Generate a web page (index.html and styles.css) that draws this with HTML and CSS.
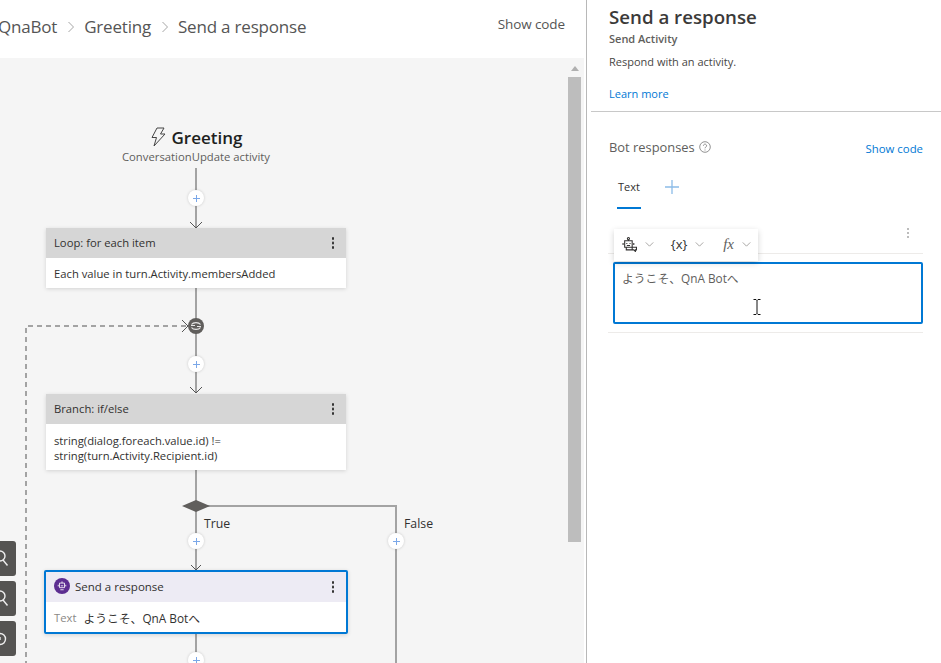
FILE: index.html
```html
<!DOCTYPE html>
<html lang="ja">
<head>
    <meta charset="UTF-8">
    <meta name="viewport" content="width=device-width, initial-scale=1.0">
    <title>Send a response</title>
    <link rel="stylesheet" href="styles.css">
</head>
<body>

    <div class="app">
        <div class="main">
            <div class="topbar">
                <div class="crumbs">
                    <span>QnaBot</span>
                    <svg class="crumb-sep" viewBox="0 0 8 12"><path d="M1.5 1l5 5-5 5"/></svg>
                    <span>Greeting</span>
                    <svg class="crumb-sep" viewBox="0 0 8 12"><path d="M1.5 1l5 5-5 5"/></svg>
                    <span>Send a response</span>
                </div>
                <span class="show-code">Show code</span>
            </div>

            <div class="canvas">
                <!-- connectors, coordinates are the canvas' own -->
                <svg class="wires" width="584" height="605" viewBox="0 0 584 605">
                    <g class="wire">
                        <path d="M196 110V170"/>
                        <path d="M196 230V335"/>
                        <path d="M196 412V512"/>
                        <path d="M196 575V605"/>
                        <path d="M196 448H396V605"/>
                    </g>
                    <path class="wire-dash" d="M186 268H26V605"/>
                    <g class="arrow">
                        <path d="M190 164l6 6 6-6"/>
                        <path d="M190 329l6 6 6-6"/>
                        <path d="M191 507l5 5 5-5"/>
                        <path d="M182 262l6 6-6 6"/>
                    </g>
                    <path class="diamond" d="M182 448l14-6 14 6-14 6z"/>
                    <circle class="loop" cx="196" cy="268" r="8"/>
                    <path class="loop-mark" d="M191.500 266.500a5 3.500 0 0 1 9 0M200.500 269.500a5 3.500 0 0 1-9 0M191 267.500h4M197 268.500h4"/>
                </svg>

                <div class="head-node">
                    <div class="head-title">
                        <svg class="bolt" viewBox="0 0 16 20"><path d="M7 1h7l-3.500 6H15L4 19l2.500-8.500H2z"/></svg>
                        <span>Greeting</span>
                    </div>
                    <div class="head-sub">ConversationUpdate activity</div>
                </div>

                <span class="plus plus-a"></span>
                <span class="plus plus-b"></span>
                <span class="plus plus-c"></span>
                <span class="plus plus-d"></span>
                <span class="plus plus-e"></span>

                <div class="node node-loop">
                    <div class="node-head"><span>Loop: for each item</span><i class="kebab"></i></div>
                    <div class="node-body">Each value in turn.Activity.membersAdded</div>
                </div>

                <div class="node node-branch">
                    <div class="node-head"><span>Branch: if/else</span><i class="kebab"></i></div>
                    <div class="node-body">string(dialog.foreach.value.id) !=<br>string(turn.Activity.Recipient.id)</div>
                </div>

                <span class="branch-label label-true">True</span>
                <span class="branch-label label-false">False</span>

                <div class="node node-send">
                    <div class="node-head">
                        <span class="bot-badge">
                            <svg viewBox="0 0 12 12"><path d="M6 .5v2M3 2.500h6v5.500H3zM4.500 5.800h3M1.500 4.500v2M10.500 4.500v2M4 10.500h4"/></svg>
                        </span>
                        <span>Send a response</span>
                        <i class="kebab"></i>
                    </div>
                    <div class="node-body send-body"><span class="send-key">Text</span><span class="send-val">ようこそ、QnA Botへ</span></div>
                </div>

                <div class="tools">
                    <div class="tool"><svg viewBox="0 0 16 35"><circle cx="0" cy="15" r="5"/><path d="M3 19l4.500 5.500"/></svg></div>
                    <div class="tool"><svg viewBox="0 0 16 35"><circle cx="0" cy="15" r="5"/><path d="M3 19l4.500 5.500"/></svg></div>
                    <div class="tool"><svg viewBox="0 0 16 35"><circle cx="0" cy="18" r="5.500"/><path d="M0 16v3"/></svg></div>
                </div>

                <div class="scrollbar">
                    <span class="scroll-up"></span>
                    <span class="scroll-thumb"></span>
                </div>
            </div>
        </div>

        <div class="panel">
            <div class="panel-top">
                <h2>Send a response</h2>
                <div class="panel-kind">Send Activity</div>
                <p class="panel-desc">Respond with an activity.</p>
                <a class="link">Learn more</a>
            </div>

            <div class="panel-bottom">
                <div class="resp-head">
                    <div class="resp-title">
                        <span>Bot responses</span>
                        <svg class="help" viewBox="0 0 12 12"><circle cx="6" cy="6" r="5.300"/><path d="M4.400 4.700a1.600 1.600 0 1 1 2.400 1.400c-.6.3-.8.600-.8 1.200M6 8.500v1"/></svg>
                    </div>
                    <a class="link">Show code</a>
                </div>

                <div class="tabs">
                    <span class="tab">Text</span>
                    <svg class="tab-add" viewBox="0 0 14 14"><path d="M7 0v14M0 7h14"/></svg>
                </div>

                <div class="editor">
                    <div class="editor-bar">
                        <i class="kebab kebab-light"></i>
                    </div>
                    <div class="toolbar">
                        <span class="tool-item">
                            <svg class="tool-bot" viewBox="0 0 14 14"><circle cx="6" cy="1.500" r="1"/><path d="M6 2.500v1M2.500 3.500h7v6h-7zM4.500 5.500v1M7.500 5.500v1M4.500 8h3M1 5.500v2M11 5.500v2M4 9.500V12h5M9.500 9.500h4v2.500h-1v1.500L11 12h-1.500z"/></svg>
                            <svg class="chev" viewBox="0 0 10 6"><path d="M.5.5L5 5 9.500.5"/></svg>
                        </span>
                        <span class="tool-item">
                            <span class="tool-var">{x}</span>
                            <svg class="chev" viewBox="0 0 10 6"><path d="M.5.5L5 5 9.500.5"/></svg>
                        </span>
                        <span class="tool-item">
                            <span class="tool-fx">fx</span>
                            <svg class="chev" viewBox="0 0 10 6"><path d="M.5.5L5 5 9.500.5"/></svg>
                        </span>
                    </div>
                    <div class="editor-box">
                        ようこそ、QnA Botへ
                        <svg class="ibeam" viewBox="0 0 8 16"><path d="M.5.5h2.500l1 1 1-1h2.500M4 1.500v13M.5 15.500h2.500l1-1 1 1h2.500"/></svg>
                    </div>
                </div>
            </div>
        </div>
    </div>

</body>
</html>
```

FILE: styles.css
```css
* {
    box-sizing: border-box;
}
body {
    margin: 0;
    font-family: "Open Sans", "Noto Sans CJK JP", sans-serif;
    color: #333;
    background-color: #fff;
    overflow: hidden;
}
.app {
    display: flex;
    width: 941px;
    height: 663px;
}

/* left side */
.main {
    width: 587px;
    flex-shrink: 0;
    border-right: 1px solid #b8b8b8;
    display: flex;
    flex-direction: column;
}
.topbar {
    height: 58px;
    display: flex;
    justify-content: space-between;
    padding-right: 21px;
}
.crumbs {
    display: flex;
    align-items: center;
    height: 53px;
    margin-left: -2px;
    font-size: 17px;
    letter-spacing: -0.2px;
    color: #555;
}
.crumb-sep {
    width: 8px;
    height: 12px;
    margin: 0 9px 0 10px;
    fill: none;
    stroke: #a6a6a6;
}
.show-code {
    font-size: 13.500px;
    letter-spacing: -0.1px;
    line-height: 48px;
    color: #555;
}
.canvas {
    position: relative;
    width: 584px;
    height: 605px;
    background-color: #f5f5f5;
    overflow: hidden;
}
.wires {
    position: absolute;
    left: 0;
    top: 0;
}
.wire path {
    fill: none;
    stroke: #a3a3a3;
    stroke-width: 2;
}
.wire-dash {
    fill: none;
    stroke: #a3a3a3;
    stroke-width: 2;
    stroke-dasharray: 5 4;
}
.arrow path {
    fill: none;
    stroke: #555;
}
.diamond {
    fill: #605e5c;
}
.loop {
    fill: #605e5c;
}
.loop-mark {
    fill: none;
    stroke: #e6e6e6;
    stroke-width: 1.200;
}
.head-node {
    position: absolute;
    left: 46px;
    top: 66px;
    width: 300px;
    text-align: center;
}
.head-title {
    display: flex;
    justify-content: center;
    align-items: center;
    gap: 6px;
    height: 26px;
    font-size: 17px;
    font-weight: 600;
    color: #201f1e;
}
.bolt {
    width: 16px;
    height: 20px;
    fill: none;
    stroke: #444;
    stroke-width: 1;
}
.head-sub {
    font-size: 11.300px;
    line-height: 13px;
    color: #605e5c;
}
.plus {
    position: absolute;
    width: 16px;
    height: 16px;
    border-radius: 50%;
    background-color: #fff;
    box-shadow: 0 0 3px rgba(0, 0, 0, 0.18);
}
.plus::before,
.plus::after {
    content: "";
    position: absolute;
    background-color: #7aa7e8;
}
.plus::before {
    left: 4.500px;
    top: 7.500px;
    width: 7px;
    height: 1px;
}
.plus::after {
    left: 7.500px;
    top: 4.500px;
    width: 1px;
    height: 7px;
}
.plus-a { left: 188px; top: 132px; }
.plus-b { left: 188px; top: 298px; }
.plus-c { left: 188px; top: 475px; }
.plus-d { left: 388px; top: 475px; }
.plus-e { left: 188px; top: 594px; }
.node {
    position: absolute;
    left: 46px;
    width: 300px;
    background-color: #fff;
    box-shadow: 0 1px 4px rgba(0, 0, 0, 0.14);
    font-size: 11.250px;
    color: #323130;
}
.node-loop { top: 170px; }
.node-branch { top: 336px; }
.node-send {
    left: 44px;
    top: 512px;
    width: 304px;
    border: 2px solid #0078d4;
    border-radius: 2px;
}
.node-head {
    position: relative;
    display: flex;
    align-items: center;
    height: 30px;
    padding: 0 0 2px 8px;
    background-color: #d6d6d6;
}
.node-body {
    padding: 9px 8px 7px;
    line-height: 14px;
}
.node-branch .node-body {
    padding: 9px 8px 7px;
    line-height: 15px;
}
.node-send .node-head {
    height: 30px;
    padding-left: 8px;
    background-color: #edebf4;
    font-size: 11.500px;
    gap: 5px;
}
.bot-badge {
    width: 16px;
    height: 16px;
    border-radius: 50%;
    background-color: #5c2d91;
    display: flex;
    align-items: center;
    justify-content: center;
}
.bot-badge svg {
    width: 10px;
    height: 10px;
    fill: none;
    stroke: #fff;
}
.send-body {
    display: flex;
    align-items: center;
    height: 30px;
    padding: 2px 8px 0;
}
.send-key {
    color: #8a8886;
    margin-right: 7px;
}
.send-val {
    font-size: 11.800px;
    color: #323130;
}
.kebab {
    position: absolute;
    right: 12px;
    top: 9px;
    width: 2.500px;
    height: 2.500px;
    border-radius: 50%;
    background-color: #333;
    box-shadow: 0 4.500px 0 #333, 0 9px 0 #333;
}
.kebab-light {
    right: 14px;
    top: 4px;
    width: 2px;
    height: 2px;
    background-color: #a6a6a6;
    box-shadow: 0 4px 0 #a6a6a6, 0 8px 0 #a6a6a6;
}
.branch-label {
    position: absolute;
    top: 457px;
    font-size: 12.300px;
    line-height: 17px;
    color: #323130;
}
.label-true { left: 204px; }
.label-false { left: 404px; }
.tools {
    position: absolute;
    left: 0;
    top: 483px;
    display: flex;
    flex-direction: column;
    gap: 5px;
}
.tool {
    width: 16px;
    height: 35px;
    background-color: #555452;
    border-radius: 0 3px 3px 0;
}
.tool svg {
    display: block;
    width: 16px;
    height: 35px;
    fill: none;
    stroke: #eee;
    stroke-width: 1.400;
}
.scrollbar {
    position: absolute;
    left: 568px;
    top: 0;
    width: 13px;
    height: 605px;
    display: flex;
    flex-direction: column;
    align-items: center;
}
.scroll-up {
    margin-top: 8px;
    width: 0;
    height: 0;
    border-left: 4px solid transparent;
    border-right: 4px solid transparent;
    border-bottom: 5px solid #b0b0b0;
}
.scroll-thumb {
    margin-top: 6px;
    width: 13px;
    height: 465px;
    background-color: #bdbdbd;
}

/* right side */
.panel {
    flex: 1;
    min-width: 0;
    padding-left: 4px;
    font-size: 12px;
    color: #605e5c;
}
.panel-top {
    height: 112px;
    padding: 4px 0 0 18px;
    border-bottom: 1px solid #c8c8c8;
}
.panel-top h2 {
    margin: 0;
    font-size: 18.700px;
    line-height: 26px;
    font-weight: 600;
    color: #3b3a39;
}
.panel-kind {
    font-size: 11px;
    font-weight: 600;
    line-height: 18px;
    color: #605e5c;
}
.panel-desc {
    margin: 6px 0 0;
    font-size: 11px;
    line-height: 15px;
    color: #484644;
}
.link {
    display: inline-block;
    font-size: 11px;
    color: #0078d4;
}
.panel-top .link {
    margin-top: 17px;
    line-height: 15px;
}
.panel-bottom {
    padding: 25px 18px 0 18px;
}
.resp-head {
    display: flex;
    justify-content: space-between;
    align-items: center;
    height: 20px;
}
.resp-title {
    display: flex;
    align-items: center;
    gap: 4px;
    font-size: 12.900px;
}
.resp-head .link {
    margin-top: 3px;
    font-size: 11.400px;
}
.help {
    width: 12px;
    height: 12px;
    fill: none;
    stroke: #767676;
    stroke-width: 0.800;
}
.tabs {
    display: flex;
    align-items: center;
    gap: 21px;
    height: 40px;
    margin-top: 12px;
    padding-left: 8px;
}
.tab {
    display: block;
    height: 40px;
    line-height: 36px;
    font-size: 11px;
    color: #323130;
    border-bottom: 2px solid #0078d4;
    padding: 0 1px;
}
.tab-add {
    width: 14px;
    height: 14px;
    margin: 0 0 5px 3px;
    stroke: #8cbce8;
    stroke-width: 1.300;
}
.editor {
    position: relative;
    margin: 15px 0 0 -1px;
    padding-bottom: 8px;
    border-bottom: 1px solid #edebe9;
}
.editor-bar {
    position: relative;
    height: 30px;
    border-bottom: 1px solid #edebe9;
}
.toolbar {
    position: absolute;
    left: 6px;
    top: 5px;
    display: flex;
    align-items: center;
    justify-content: space-between;
    width: 144px;
    height: 32px;
    padding: 0 7px 2px 8px;
    background-color: #fff;
    box-shadow: 0 2px 6px rgba(0, 0, 0, 0.18);
    z-index: 1;
}
.tool-item {
    display: flex;
    align-items: center;
    gap: 8px;
    color: #323130;
}
.tool-bot {
    width: 15px;
    height: 15px;
    fill: none;
    stroke: #323130;
}
.tool-var {
    font-size: 13px;
    margin-left: 2px;
}
.tool-fx {
    font-family: "Liberation Serif", serif;
    font-style: italic;
    font-size: 15px;
    margin-left: 4px;
    color: #605e5c;
}
.chev {
    width: 9px;
    height: 5px;
    fill: none;
    stroke: #979593;
}
.editor-box {
    position: relative;
    height: 62px;
    margin: 8px 0 0 5px;
    width: 310px;
    padding: 6px 7px;
    border: 2px solid #0078d4;
    border-radius: 2px;
    font-size: 11.800px;
    line-height: 17px;
    color: #605e5c;
}
.ibeam {
    position: absolute;
    left: 138px;
    top: 35px;
    width: 8px;
    height: 16px;
    fill: none;
    stroke: #111;
}
```
